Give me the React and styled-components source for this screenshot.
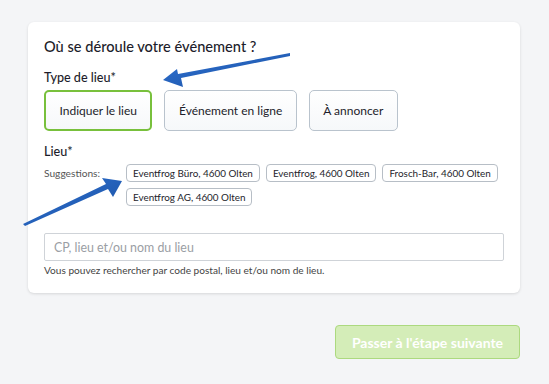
import React from "react";
import styled, { createGlobalStyle } from "styled-components";

const GlobalStyle = createGlobalStyle`
  html, body {
    margin: 0;
    padding: 0;
    background: #f4f5f7;
    font-family: Lato, "Noto Sans", sans-serif;
    color: #1d1d2b;
  }
`;

const Page = styled.div`
  position: relative;
  width: 549px;
  height: 384px;
  padding: 22px 29px 0 28px;
  box-sizing: border-box;
`;

const Card = styled.section`
  background: #fff;
  border-radius: 6px;
  box-shadow: 0 1px 3px rgba(0, 0, 0, 0.12);
  padding: 15px 16px 17px 16px;
`;

const Title = styled.h2`
  margin: 0 0 13px;
  font-size: 14.6px;
  font-weight: 500;
  line-height: 20px;
`;

const Label = styled.div`
  font-size: 12.6px;
  font-weight: 500;
  line-height: 16px;
  margin-bottom: 4px;
`;

const TypeRow = styled.div`
  display: flex;
  gap: 12px;
  margin-top: 1px;
  margin-bottom: 13px;
`;

const TypeButton = styled.button`
  height: 41px;
  padding: 0 13.5px;
  border-radius: 5px;
  border: ${(p) => (p.$active ? "2px solid #78c03c" : "1px solid #b9c3cd")};
  background: linear-gradient(#ffffff, #f6f8fa);
  font-family: inherit;
  font-size: 12px;
  color: #1d1d2b;
`;

const SuggestRow = styled.div`
  display: flex;
  align-items: flex-start;
  margin-bottom: 27px;
`;

const SuggestLabel = styled.span`
  width: 82px;
  flex-shrink: 0;
  padding-top: 3px;
  font-size: 10.2px;
  color: #555;
`;

const Chips = styled.div`
  display: flex;
  flex-wrap: wrap;
  gap: 6px;
`;

const Chip = styled.button`
  height: 18px;
  padding: 0 6px;
  border: 1px solid #b7bec6;
  border-radius: 4px;
  background: #fff;
  font-family: inherit;
  font-size: 9.9px;
  color: #1d1d2b;
  line-height: 16px;
`;

const Input = styled.input`
  display: block;
  width: 100%;
  box-sizing: border-box;
  height: 28px;
  padding: 0 9px;
  border: 1px solid #cfd3d8;
  border-radius: 2px;
  font-family: inherit;
  font-size: 12.4px;
  &::placeholder {
    color: #9a9ea4;
  }
`;

const Help = styled.p`
  margin: 3px 0 0;
  font-size: 10.1px;
  color: #444;
`;

const Footer = styled.div`
  display: flex;
  justify-content: flex-end;
  margin-top: 32px;
`;

const NextButton = styled.button`
  width: 185px;
  height: 34px;
  border: 1px solid #acd97f;
  border-radius: 4px;
  background: #d4edb8;
  color: #fff;
  font-family: inherit;
  font-size: 14px;
  font-weight: 700;
`;

const Arrow = styled.svg`
  position: absolute;
  left: 0;
  top: 0;
  pointer-events: none;
`;

const suggestions = [
  "Eventfrog Büro, 4600 Olten",
  "Eventfrog, 4600 Olten",
  "Frosch-Bar, 4600 Olten",
  "Eventfrog AG, 4600 Olten",
];

export default function App() {
  return (
    <Page>
      <GlobalStyle />
      <Card>
        <Title>Où se déroule votre événement ?</Title>
        <Label>Type de lieu*</Label>
        <TypeRow>
          <TypeButton $active>Indiquer le lieu</TypeButton>
          <TypeButton>Événement en ligne</TypeButton>
          <TypeButton>À annoncer</TypeButton>
        </TypeRow>
        <Label>Lieu*</Label>
        <SuggestRow>
          <SuggestLabel>Suggestions:</SuggestLabel>
          <Chips>
            {suggestions.map((s) => (
              <Chip key={s}>{s}</Chip>
            ))}
          </Chips>
        </SuggestRow>
        <Input placeholder="CP, lieu et/ou nom du lieu" />
        <Help>Vous pouvez rechercher par code postal, lieu et/ou nom de lieu.</Help>
      </Card>
      <Footer>
        <NextButton>Passer à l'étape suivante</NextButton>
      </Footer>
      <Arrow width="549" height="384" viewBox="0 0 549 384">
        <defs>
          <linearGradient id="ag" x1="0" y1="0" x2="1" y2="1">
            <stop offset="0" stopColor="#2f73d6" />
            <stop offset="1" stopColor="#1a4f9e" />
          </linearGradient>
        </defs>
        <polygon
          fill="url(#ag)"
          points="290,53 290,56 181,78 183,87 163,80 177,69 178,74"
        />
        <polygon
          fill="url(#ag)"
          points="23,224 25,226 108,189 113,197 122,181 102,178 106,184"
        />
      </Arrow>
    </Page>
  );
}
